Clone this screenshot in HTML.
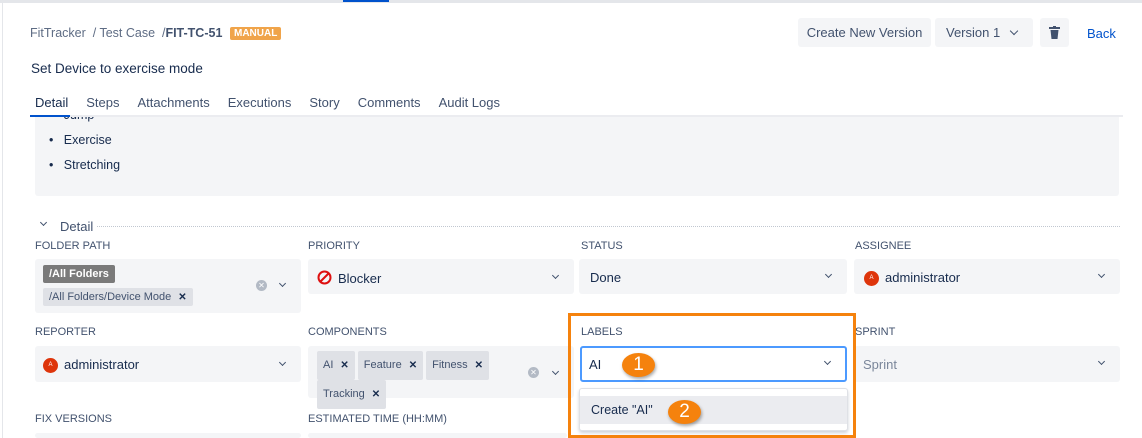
<!DOCTYPE html>
<html style="overflow:hidden;height:438px"><head><style>
*{box-sizing:border-box;margin:0;padding:0}
body{width:1142px;height:438px;overflow:hidden;background:#fff;font-family:"Liberation Sans",sans-serif;color:#172b4d;position:relative;font-size:13px}
.a{position:absolute}
.lbl{position:absolute;font-size:11px;color:#42526e}
.box{position:absolute;background:#f4f5f7;border-radius:3px}
.chev{position:absolute;width:6px;height:6px;border-right:1.6px solid #42526e;border-bottom:1.6px solid #42526e;transform:rotate(45deg)}
.tag{display:inline-block;background:#dfe1e6;border-radius:2px;font-size:11px;color:#42526e;padding:3px 6px;margin-right:3px}
.tag b{font-size:10px;color:#172b4d;margin-left:7px}
.av{display:inline-block;width:15px;height:15px;border-radius:50%;background:#de350b;color:#fff;font-size:6px;text-align:center;line-height:15px;vertical-align:middle;margin-right:6px}
.clr{position:absolute;width:11px;height:11px;border-radius:50%;background:#b3bac5;color:#fff;font-size:8px;line-height:11px;text-align:center}
.bd{position:absolute;background:#f5820d;color:#fff;border-radius:50%;font-size:19px;text-align:center;box-shadow:1px 2px 3px rgba(0,0,0,.35)}
</style></head><body>
<div class="a" style="left:0;top:0;width:1142px;height:3px;background:#e4e6ea"></div>
<div class="a" style="left:343px;top:0;width:46px;height:2px;background:#0052cc"></div>
<div class="a" style="left:2px;top:3px;width:1px;height:435px;background:#e4e6ea"></div>

<div class="a" style="left:30px;top:26px;font-size:12.5px;color:#5e6c84">FitTracker &nbsp;/ Test Case &nbsp;/<b style="color:#42526e">FIT-TC-51</b></div>
<div class="a" style="left:230px;top:27px;background:#f0a44a;color:#fff;font-size:10px;font-weight:bold;padding:1px 4px;border-radius:2px">MANUAL</div>
<div class="a" style="left:31px;top:61px;font-size:13.5px;color:#172b4d">Set Device to exercise mode</div>

<div class="a" style="left:798px;top:18px;width:133px;height:29px;background:#f4f5f7;border-radius:3px;font-size:13px;color:#42526e;text-align:center;line-height:29px">Create New Version</div>
<div class="a" style="left:935px;top:18px;width:98px;height:29px;background:#f4f5f7;border-radius:3px;font-size:13px;color:#42526e;line-height:29px;padding-left:11px">Version 1</div>
<div class="chev" style="left:1011px;top:28px"></div>
<div class="a" style="left:1040px;top:18px;width:29px;height:29px;background:#f4f5f7;border-radius:3px"></div>
<svg class="a" style="left:1049px;top:26px" width="11" height="13" viewBox="0 0 11 13"><rect x="0" y="1" width="11" height="2" fill="#42526e"/><rect x="4" y="0" width="3" height="2" fill="#42526e"/><path d="M1.5 4h8l-1 9h-6z" fill="#42526e"/></svg>
<div class="a" style="left:1087px;top:26px;font-size:13px;color:#0052cc">Back</div>

<div class="a" style="left:35px;top:95px;font-size:13px;color:#42526e">
<span style="color:#172b4d">Detail</span><span style="margin-left:18px">Steps</span><span style="margin-left:18px">Attachments</span><span style="margin-left:18px">Executions</span><span style="margin-left:18px">Story</span><span style="margin-left:18px">Comments</span><span style="margin-left:18px">Audit Logs</span></div>
<div class="a" style="left:35px;top:115px;width:1084px;height:81px;background:#f4f5f7;border-radius:0 0 3px 3px"></div>
<div class="a" style="left:30px;top:115px;width:1093px;height:2px;background:#ebecf0"></div>
<div class="a" style="left:30px;top:115px;width:40px;height:2px;background:#0052cc"></div>
<div class="a" style="left:49px;top:108px;font-size:12.5px;color:#172b4d;clip-path:inset(9px 0 0 0)">•&nbsp;&nbsp;&nbsp;Jump</div>
<div class="a" style="left:49px;top:133px;font-size:12.5px;color:#172b4d">•&nbsp;&nbsp;&nbsp;Exercise</div>
<div class="a" style="left:49px;top:158px;font-size:12.5px;color:#172b4d">•&nbsp;&nbsp;&nbsp;Stretching</div>

<div class="chev" style="left:41px;top:220px;width:5px;height:5px"></div>
<div class="a" style="left:60px;top:219px;font-size:13px;color:#42526e">Detail</div>
<div class="a" style="left:97px;top:226px;width:1023px;border-top:1px dotted #c1c7d0"></div>

<div class="lbl" style="left:35px;top:240px">FOLDER PATH</div>
<div class="lbl" style="left:308px;top:240px">PRIORITY</div>
<div class="lbl" style="left:581px;top:240px">STATUS</div>
<div class="lbl" style="left:855px;top:240px">ASSIGNEE</div>

<div class="box" style="left:35px;top:259px;width:266px;height:54px"></div>
<div class="a" style="left:43px;top:265px;background:#7a7a7a;color:#fff;font-size:11px;font-weight:bold;padding:3px 6px;border-radius:2px">/All Folders</div>
<div class="a" style="left:43px;top:288px"><span class="tag">/All Folders/Device Mode<b>✕</b></span></div>
<div class="clr" style="left:256px;top:280px">✕</div>
<div class="chev" style="left:280px;top:281px;width:5px;height:5px"></div>

<div class="box" style="left:308px;top:259px;width:266px;height:35px"></div>
<svg class="a" style="left:317px;top:270px" width="15" height="15" viewBox="0 0 15 15"><circle cx="7.5" cy="7.5" r="6" fill="none" stroke="#de1010" stroke-width="2"/><path d="M3.5 11.5L11.5 3.5" stroke="#de1010" stroke-width="2"/></svg>
<div class="a" style="left:338px;top:271px;font-size:13px">Blocker</div>
<div class="chev" style="left:553px;top:273px;width:5px;height:5px"></div>

<div class="box" style="left:579px;top:259px;width:268px;height:35px"></div>
<div class="a" style="left:590px;top:270px;font-size:13px">Done</div>
<div class="chev" style="left:826px;top:272px;width:5px;height:5px"></div>

<div class="box" style="left:854px;top:259px;width:266px;height:35px"></div>
<div class="a" style="left:864px;top:270px;font-size:13px"><span class="av">A</span>administrator</div>
<div class="chev" style="left:1099px;top:272px;width:5px;height:5px"></div>

<div class="lbl" style="left:35px;top:326px">REPORTER</div>
<div class="lbl" style="left:308px;top:326px">COMPONENTS</div>
<div class="lbl" style="left:581px;top:326px">LABELS</div>
<div class="lbl" style="left:855px;top:326px">SPRINT</div>

<div class="box" style="left:35px;top:346px;width:266px;height:36px"></div>
<div class="a" style="left:43px;top:357px;font-size:13px"><span class="av">A</span>administrator</div>
<div class="chev" style="left:280px;top:360px;width:5px;height:5px"></div>

<div class="box" style="left:308px;top:346px;width:266px;height:52px"></div>
<div class="a" style="left:317px;top:351px;width:200px;line-height:23px"><span class="tag">AI<b>✕</b></span><span class="tag">Feature<b>✕</b></span><span class="tag">Fitness<b>✕</b></span><span class="tag">Tracking<b>✕</b></span></div>
<div class="clr" style="left:528px;top:367px">✕</div>
<div class="chev" style="left:553px;top:369px;width:5px;height:5px"></div>

<div class="box" style="left:854px;top:346px;width:266px;height:36px"></div>
<div class="a" style="left:863px;top:357px;font-size:13px;color:#7a869a">Sprint</div>
<div class="chev" style="left:1099px;top:359px;width:5px;height:5px"></div>

<div class="a" style="left:580px;top:346px;width:267px;height:36px;border:2px solid #4c9aff;border-radius:3px;background:#fff"></div>
<div class="a" style="left:589px;top:357px;font-size:13px">AI</div>
<div class="chev" style="left:825px;top:359px;width:5px;height:5px"></div>
<div class="a" style="left:579px;top:388px;width:269px;height:43px;background:#fff;border:1px solid #dfe1e6;border-radius:3px;box-shadow:0 2px 3px rgba(9,30,66,.2)"></div>
<div class="a" style="left:580px;top:396px;width:267px;height:28px;background:#ebecf0"></div>
<div class="a" style="left:591px;top:403px;font-size:12.5px;color:#172b4d">Create "AI"</div>

<div class="a" style="left:568px;top:313px;width:288px;height:125px;border:3px solid #f5820d"></div>
<div class="bd" style="left:622px;top:353px;width:33px;height:24px;line-height:24px">1</div>
<div class="bd" style="left:668px;top:400px;width:33px;height:24px;line-height:24px">2</div>

<div class="lbl" style="left:35px;top:413px">FIX VERSIONS</div>
<div class="lbl" style="left:308px;top:413px">ESTIMATED TIME (HH:MM)</div>
<div class="box" style="left:35px;top:433px;width:266px;height:5px"></div>
<div class="box" style="left:308px;top:433px;width:259px;height:5px"></div>
</body></html>
